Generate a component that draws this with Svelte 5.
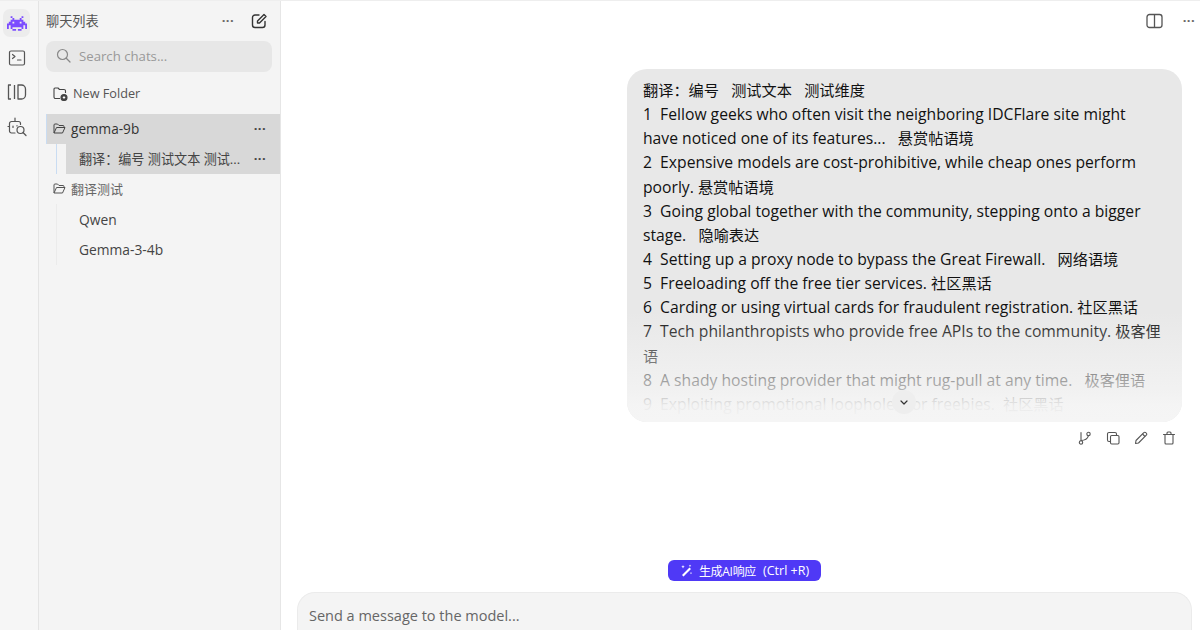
<script>
  const lines = [
    '翻译：编号   测试文本   测试维度',
    '1  Fellow geeks who often visit the neighboring IDCFlare site might',
    'have noticed one of its features...   悬赏帖语境',
    '2  Expensive models are cost-prohibitive, while cheap ones perform',
    'poorly. 悬赏帖语境',
    '3  Going global together with the community, stepping onto a bigger',
    'stage.   隐喻表达',
    '4  Setting up a proxy node to bypass the Great Firewall.   网络语境',
    '5  Freeloading off the free tier services. 社区黑话',
    '6  Carding or using virtual cards for fraudulent registration. 社区黑话',
    '7  Tech philanthropists who provide free APIs to the community. 极客俚',
    '语',
    '8  A shady hosting provider that might rug-pull at any time.   极客俚语',
    '9  Exploiting promotional loopholes for freebies.  社区黑话'
  ];
  const parts = (s) => s.split(/([\u3000-\u9fff\uff00-\uffef]+)/).filter(Boolean).map((t) => ({ t, cjk: /[\u3000-\u9fff\uff00-\uffef]/.test(t) }));
</script>

<div class="page">
  <nav class="rail">
    <button class="rail-btn active" aria-label="Models">
      <svg width="20" height="15" viewBox="0 0 11 8" fill="#7c4dff"><path d="M2 0h1v1h1v1h3V1h1V0h1v1H8v1h1v1h1v1h1v3h-1V5H9v2H8V6H3v1H2V5H1v2H0V4h1V3h1V2h1V1H2zM3 3v1h1V3zm4 0v1h1V3zM3 7h2v1H3zm3 0h2v1H6z" fill-rule="evenodd"/></svg>
    </button>
    <button class="rail-btn" aria-label="Terminal">
      <svg width="18" height="18" viewBox="0 0 18 18" fill="none" stroke="#555" stroke-width="1.200" stroke-linecap="round" stroke-linejoin="round"><rect x="1.500" y="2" width="15" height="14" rx="1.500"/><path d="M4.500 5.500 7 7.500 4.500 9.500M9.500 11h3.500"/></svg>
    </button>
    <button class="rail-btn" aria-label="Library">
      <svg width="20" height="18" viewBox="0 0 20 18" fill="none" stroke="#555" stroke-width="1.300" stroke-linejoin="round"><path d="M4 2H1.500v14H4M7.500 2v14M11 2h3.500A4 4 0 0 1 18.500 6v6a4 4 0 0 1-4 4H11z"/></svg>
    </button>
    <button class="rail-btn" aria-label="Bot search">
      <svg width="20" height="20" viewBox="0 0 20 20" fill="none" stroke="#555" stroke-width="1.200" stroke-linecap="round"><path d="M8 1v3.500M8 16H4.500a2 2 0 0 1-2-2V6.500a2 2 0 0 1 2-2h7a2 2 0 0 1 2 2v1M2.500 9.500H1M6 9v1.500M10 8.500V9"/><circle cx="13.500" cy="13" r="3.500"/><path d="m16 15.500 3 3"/></svg>
    </button>
  </nav>

  <aside class="sidebar">
    <header class="side-head">
      <span class="side-title">聊天列表</span>
      <span class="dots small">···</span>
      <svg class="compose" width="16" height="16" viewBox="0 0 16 16" fill="none" stroke="#333" stroke-width="1.400" stroke-linecap="round" stroke-linejoin="round"><path d="M8 2H4a2.500 2.500 0 0 0-2.500 2.500v7.500A2.500 2.500 0 0 0 4 14.500h7.500A2.500 2.500 0 0 0 14 12V8.500"/><path d="M13 1.500 15 3.500 8.500 10H6.500V8z"/></svg>
    </header>
    <div class="search">
      <svg width="15" height="15" viewBox="0 0 15 15" fill="none" stroke="#888" stroke-width="1.200" stroke-linecap="round"><circle cx="6.500" cy="6.500" r="5"/><path d="m10.500 10.500 3.500 3.500"/></svg>
      <span>Search chats...</span>
    </div>
    <div class="new-folder">
      <svg width="15" height="15" viewBox="0 0 15 15" fill="none" stroke="#444" stroke-width="1.100" stroke-linejoin="round"><path d="M7 12.500H2.500a1.500 1.500 0 0 1-1.500-1.500V3a1 1 0 0 1 1-1h3l1.500 1.500H11a1.500 1.500 0 0 1 1.500 1.500v2"/><circle cx="11" cy="11.500" r="3" fill="#444"/><path d="M9.800 11.500h2.400M11 10.300v2.400" stroke="#fff"/></svg>
      <span>New Folder</span>
    </div>
    <div class="folder selected">
      <svg class="ficon" width="13" height="13" viewBox="0 0 13 13" fill="none" stroke="#444" stroke-width="1" stroke-linejoin="round"><path d="M1 11V3a1 1 0 0 1 1-1h2.500L6 3.500h4a1 1 0 0 1 1 1V5.500H3.500L1 11h8.500L12 5.500h-1"/></svg>
      <span class="fname">gemma-9b</span>
      <span class="dots">···</span>
    </div>
    <div class="tree active-tree">
      <div class="chat selected">
        <span class="cname cjk">翻译：编号 测试文本 测试...</span>
        <span class="dots">···</span>
      </div>
    </div>
    <div class="folder">
      <svg class="ficon" width="13" height="13" viewBox="0 0 13 13" fill="none" stroke="#555" stroke-width="1" stroke-linejoin="round"><path d="M1 11V3a1 1 0 0 1 1-1h2.500L6 3.500h4a1 1 0 0 1 1 1V5.500H3.500L1 11h8.500L12 5.500h-1"/></svg>
      <span class="fname muted">翻译测试</span>
    </div>
    <div class="tree lower">
      <div class="chat"><span class="cname">Qwen</span></div>
      <div class="chat"><span class="cname">Gemma-3-4b</span></div>
    </div>
  </aside>

  <main class="main">
    <div class="topbar">
      <svg width="17" height="16" viewBox="0 0 17 16" fill="none" stroke="#555" stroke-width="1.300"><rect x="1" y="1.500" width="15" height="13" rx="2.500"/><path d="M8.500 1.500v13"/></svg>
      <span class="dots top">···</span>
    </div>

    <div class="thread">
      <div class="bubble">
        <div class="bubble-text">
          {#each lines as l}<p>{#each parts(l) as p}{#if p.cjk}<span class="han">{p.t}</span>{:else}{p.t}{/if}{/each}</p>{/each}
        </div>
        <span class="expand" aria-label="Expand">
          <svg width="8" height="5" viewBox="0 0 8 5" fill="none" stroke="#333" stroke-width="1.200" stroke-linecap="round" stroke-linejoin="round"><path d="M1 1 4 4 7 1"/></svg>
        </span>
      </div>
      <div class="actions">
        <svg width="14" height="14" viewBox="0 0 14 14" fill="none" stroke="#555" stroke-width="1.100" stroke-linecap="round"><circle cx="3" cy="11.500" r="1.700"/><circle cx="10.500" cy="3" r="1.700"/><path d="M3 9.800V1.500M3 9.500c4 0 6.500-1.500 7.500-4.800"/></svg>
        <svg width="14" height="14" viewBox="0 0 14 14" fill="none" stroke="#555" stroke-width="1.100" stroke-linejoin="round"><rect x="4.500" y="4.500" width="8.500" height="8.500" rx="1.200"/><path d="M4.500 10.500H3A1.500 1.500 0 0 1 1.500 9V3A1.500 1.500 0 0 1 3 1.500h6A1.500 1.500 0 0 1 10.500 3v1.500"/></svg>
        <svg width="14" height="14" viewBox="0 0 14 14" fill="none" stroke="#555" stroke-width="1.100" stroke-linejoin="round"><path d="M1.500 12.500 2 9.500 9.800 1.700a1.300 1.300 0 0 1 2 0l.5.500a1.300 1.300 0 0 1 0 2L4.500 12z"/><path d="m8.500 3 2.500 2.500"/></svg>
        <svg width="14" height="14" viewBox="0 0 14 14" fill="none" stroke="#555" stroke-width="1.100" stroke-linecap="round" stroke-linejoin="round"><path d="M1.500 3.500h11M5 3.500V2a1 1 0 0 1 1-1h2a1 1 0 0 1 1 1v1.500M3 3.500v8.500a1 1 0 0 0 1 1h6a1 1 0 0 0 1-1V3.500"/></svg>
      </div>
    </div>

    <div class="composer-wrap">
      <button class="generate">
        <svg width="13" height="13" viewBox="0 0 13 13" fill="#fff"><path d="M9.500 3.500 11 5 3.500 12.500 2 11zM3 1l.5 1.200L4.700 2.700 3.500 3.200 3 4.400 2.500 3.200 1.300 2.700 2.500 2.200zM10 .5l.4.900.9.400-.9.400-.4.900-.4-.9-.9-.4.9-.4zM11 8l.3.800.8.300-.8.300-.3.800-.3-.8-.8-.3.800-.3z"/></svg>
        <span class="gen-cjk">生成AI响应</span><span class="gen-key">(Ctrl +R)</span>
      </button>
      <div class="composer">Send a message to the model...</div>
    </div>
  </main>
</div>

<style>
  :global(body) { margin: 0; background: #fff; }
  .page {
    width: 1200px; height: 630px; overflow: hidden; display: flex;
    font-family: "Open Sans", "Noto Sans CJK SC", sans-serif; color: #111;
    border-top: 1px solid #eee; box-sizing: border-box;
  }
  .rail {
    width: 38px; flex: none; background: #f6f6f6; border-right: 1px solid #e4e4e4;
    display: flex; flex-direction: column; align-items: flex-start; padding-top: 8px; gap: 6.500px;
  }
  .rail-btn {
    width: 27px; height: 28px; margin-left: 3px; border: 0; padding: 0; background: none; border-radius: 7px;
    display: flex; align-items: center; justify-content: center;
  }
  .rail-btn.active { background: #ececec; }
  .sidebar {
    width: 241px; flex: none; background: #f4f4f4; border-right: 1px solid #e6e6e6;
    padding-top: 4px; font-size: 13.500px; color: #444;
  }
  .side-head { height: 30px; display: flex; align-items: center; padding-left: 7px; }
  .side-title { font-size: 13.200px; color: #555; flex: 1; }
  .dots { font-size: 13px; font-weight: 700; color: #444; line-height: 1; letter-spacing: 0.4px; }
  .dots.small { margin-right: 17px; font-weight: 700; color: #666; }
  .compose { margin-right: 13px; margin-top: 1px; }
  .search {
    margin: 6px 8px 0 7px; height: 31px; border-radius: 8px; background: #e7e7e7;
    display: flex; align-items: center; gap: 8px; padding: 0 0 2px 10px; box-sizing: border-box; color: #999; font-size: 13.200px;
  }
  .new-folder { height: 30px; margin-top: 6px; display: flex; align-items: center; gap: 5px; padding-left: 14px; color: #555; font-size: 12.700px; }
  .folder { height: 30px; box-sizing: border-box; padding-bottom: 2px; margin-left: 7px; display: flex; align-items: center; padding-left: 7px; gap: 5px; }
  .new-folder + .folder { margin-top: 6px; }
  .folder.selected { background: #d8d8d8; border-left: 1px solid #c9dcf2; padding-left: 6px; }
  .fname { flex: 1; font-size: 13.600px; color: #333; }
  .fname.muted { color: #666; font-size: 13px; }
  .folder .dots, .chat .dots { margin-right: 14px; }
  .tree { margin-left: 17px; padding-left: 9px; border-left: 1px solid #ebebeb; }
  .tree.active-tree { border-left: 1px solid #c9dcf2; }
  .tree.lower { padding-top: 1px; }
  .chat { height: 30px; box-sizing: border-box; padding-bottom: 2px; display: flex; align-items: center; padding-left: 13px; }
  .chat.selected { background: #d8d8d8; }
  .cname { flex: 1; color: #444; font-size: 13.800px; }
  .cname.cjk { font-size: 13.100px; }
  .main { flex: 1; display: flex; flex-direction: column; min-width: 0; position: relative; }
  .topbar { height: 39px; display: flex; justify-content: flex-end; align-items: center; padding-right: 5px; gap: 20px; flex: none; }
  .dots.top { color: #666; font-weight: 700; }
  .thread { flex: 1; padding: 29px 18px 0 0; display: flex; flex-direction: column; align-items: flex-end; }
  .bubble {
    width: 555px; height: 353px; border-radius: 20px; background: #e8e8e8; position: relative;
    overflow: hidden; box-sizing: border-box; padding: 9px 16px 0;
  }
  .bubble::after {
    content: ""; position: absolute; left: 0; right: 0; bottom: 0; height: 110px;
    background: linear-gradient(to bottom, rgba(245,245,245,0), rgba(245,245,245,.7) 70%, rgba(245,245,245,.95) 85%, #f5f5f5);
  }
  .bubble-text { font-size: 15.700px; line-height: 24.150px; color: #111; }
  .bubble-text p { margin: 0; height: 24.150px; white-space: pre; }
  .han { font-size: 15.200px; }
  .expand {
    position: absolute; left: 265px; bottom: 8px; width: 24px; height: 24px; border-radius: 50%;
    background: #eeeeee; display: flex; align-items: center; justify-content: center; z-index: 1;
  }
  .actions { display: flex; gap: 14px; padding: 9px 6px 0 0; }
  .composer-wrap { flex: none; display: flex; flex-direction: column; align-items: center; }
  .generate {
    height: 21px; border: 0; border-radius: 6px; background: #4f39f6; color: #fff; margin-left: 8px;
    display: flex; align-items: center; gap: 6px; padding: 0 12px; font-family: "Open Sans", "Noto Sans CJK SC", sans-serif;
  }
  .gen-cjk { font-size: 12px; letter-spacing: -0.3px; }
  .gen-key { font-size: 12.500px; margin-left: 1px; }
  .composer {
    align-self: flex-start; margin: 11px 0 0 16px; width: 895px; height: 38px; box-sizing: border-box;
    background: #f4f4f4; border: 1px solid #ebebeb; border-bottom: 0; border-radius: 18px 18px 0 0;
    padding: 13px 11px 0; font-size: 14.500px; color: #666;
  }
</style>
